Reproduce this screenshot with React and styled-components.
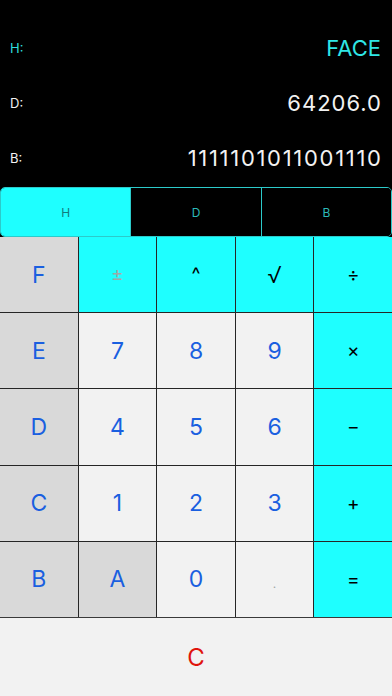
import React, { useState } from "react";
import styled, { createGlobalStyle } from "styled-components";

const GlobalStyle = createGlobalStyle`
  html, body {
    margin: 0;
    padding: 0;
    background: #000;
  }
  body {
    font-family: Inter, "Liberation Sans", Arial, sans-serif;
  }
`;

const CYAN = "#1effff";

const keys = [
  { label: "F", kind: "hex" },
  { label: "±", kind: "op", muted: true },
  { label: "^", kind: "op" },
  { label: "√", kind: "op", big: true },
  { label: "÷", kind: "op" },
  { label: "E", kind: "hex" },
  { label: "7", kind: "num" },
  { label: "8", kind: "num" },
  { label: "9", kind: "num" },
  { label: "×", kind: "op" },
  { label: "D", kind: "hex" },
  { label: "4", kind: "num" },
  { label: "5", kind: "num" },
  { label: "6", kind: "num" },
  { label: "−", kind: "op" },
  { label: "C", kind: "hex" },
  { label: "1", kind: "num" },
  { label: "2", kind: "num" },
  { label: "3", kind: "num" },
  { label: "+", kind: "op" },
  { label: "B", kind: "hex" },
  { label: "A", kind: "hex" },
  { label: "0", kind: "num" },
  { label: ".", kind: "num", muted: true },
  { label: "=", kind: "op" },
];

const rows = [
  { label: "H:", value: "FACE", active: true, spacing: 0 },
  { label: "D:", value: "64206.0", spacing: 1 },
  { label: "B:", value: "1111101011001110", spacing: 1.7 },
];

function App() {
  const [mode, setMode] = useState("H");

  return (
    <>
      <GlobalStyle />
      <Screen>
        <Display>
          {rows.map((r) => (
            <Row key={r.label}>
              <Label $active={r.active}>{r.label}</Label>
              <Value $active={r.active} $spacing={r.spacing}>
                {r.value}
              </Value>
            </Row>
          ))}
        </Display>
        <Segmented>
          {["H", "D", "B"].map((m) => (
            <Segment key={m} $selected={mode === m} onClick={() => setMode(m)}>
              {m}
            </Segment>
          ))}
        </Segmented>
        <Keypad>
          {keys.map((k, i) => (
            <Key key={i} $kind={k.kind} $muted={k.muted} $big={k.big}>
              {k.label}
            </Key>
          ))}
        </Keypad>
        <ClearButton>C</ClearButton>
      </Screen>
    </>
  );
}

export default App;

const Screen = styled.div`
  width: 392px;
  height: 696px;
  display: flex;
  flex-direction: column;
  background: #000;
  overflow: hidden;
`;

const Display = styled.div`
  height: 187px;
  box-sizing: border-box;
  padding: 20px 11px 0 10px;
  display: flex;
  flex-direction: column;
`;

const Row = styled.div`
  height: 55px;
  display: flex;
  align-items: center;
  justify-content: space-between;
`;

const Label = styled.span`
  font-size: 13px;
  color: ${(p) => (p.$active ? "#2fdede" : "#f2f2f2")};
`;

const Value = styled.span`
  font-size: 22px;
  letter-spacing: ${(p) => p.$spacing}px;
  margin-right: ${(p) => -p.$spacing}px;
  color: ${(p) => (p.$active ? "#2fe6e6" : "#f2f2f2")};
`;

const Segmented = styled.div`
  height: 50px;
  box-sizing: border-box;
  display: flex;
  border: 1px solid #2ccaca;
  border-radius: 5px;
  overflow: hidden;
`;

const Segment = styled.div`
  flex: 1;
  display: flex;
  align-items: center;
  justify-content: center;
  font-size: 12px;
  cursor: pointer;
  background: ${(p) => (p.$selected ? CYAN : "#000")};
  color: ${(p) => (p.$selected ? "#137c7c" : "#2cb8b8")};
  & + & {
    border-left: 1px solid #2ccaca;
  }
`;

const Keypad = styled.div`
  height: 381px;
  box-sizing: border-box;
  display: grid;
  grid-template-columns: repeat(5, 1fr);
  grid-template-rows: repeat(5, 1fr);
  gap: 1px;
  background: #262626;
  border-bottom: 1px solid #3a3a3a;
`;

const keyBg = { hex: "#d9d9d9", num: "#f2f2f2", op: CYAN };

const Key = styled.div`
  display: flex;
  align-items: center;
  justify-content: center;
  background: ${(p) => keyBg[p.$kind]};
  font-size: ${(p) => (p.$kind === "op" ? (p.$big ? "23px" : "19px") : "23px")};
  font-weight: ${(p) => (p.$big ? 300 : 400)};
  color: ${(p) =>
    p.$muted ? "#a0a8a8" : p.$kind === "op" ? "#000" : "#1a5fe0"};
  ${(p) => p.$muted && p.$kind === "num" && "font-size: 12px; padding-top: 8px;"}
`;

const ClearButton = styled.div`
  flex: 1;
  display: flex;
  align-items: center;
  justify-content: center;
  background: #f2f2f2;
  font-size: 24px;
  color: #e0140c;
`;
